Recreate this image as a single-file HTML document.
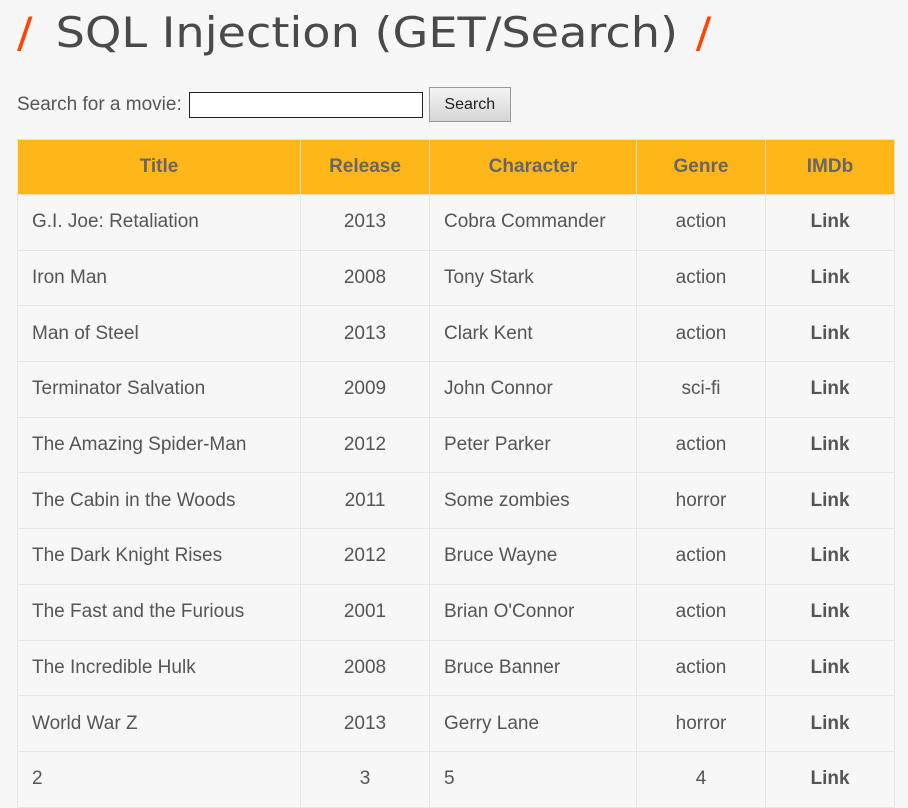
<!DOCTYPE html>
<html><head><meta charset="utf-8"><style>
html,body{margin:0;padding:0;background:#f7f7f7;width:908px;height:808px;overflow:hidden}
body{font-family:"Liberation Sans",Arial,sans-serif;color:#555;position:relative}
h1{position:absolute;left:17px;top:8px;margin:0;font-family:"DejaVu Sans",sans-serif;font-weight:normal;font-size:42px;color:#4a4a4a;white-space:nowrap;transform:scaleX(1.1);transform-origin:left}
h1 span{color:#ff4500}
h1 b{font-weight:normal;margin:0 16px 0 21px}
.search{position:absolute;left:17px;top:87px;font-size:19px;display:flex;align-items:center}
.search input{border:1px solid #222;background:#fff;margin:0 6px 0 7px;padding:0;box-sizing:border-box;height:26px;width:234px}
.search button{font-family:"Liberation Sans",Arial,sans-serif;font-size:16px;height:35px;width:82px;border:1px solid #999;background:linear-gradient(#f4f4f4,#d6d6d6);color:#222;padding:0}
table{position:absolute;left:17px;top:139px;border-collapse:collapse;font-size:19px}
td,th{border:1px solid #e6e6e6;height:55.7px;padding:0 14px;box-sizing:border-box}
th{background:#ffb619;color:#666;font-weight:bold;border-color:#f0e0c0;border-left-color:#fbecc8;height:55px}
td.c{text-align:center}
td.l{font-weight:bold;text-align:center;color:#555}
</style></head><body>
<h1><span>/</span><b>SQL Injection (GET/Search)</b><span>/</span></h1>
<div class="search">Search for a movie: <input type="text"><button>Search</button></div>
<table>
<tr><th style="width:283px">Title</th><th style="width:129px">Release</th><th style="width:207px">Character</th><th style="width:129px">Genre</th><th style="width:129px">IMDb</th></tr>
<tr><td>G.I. Joe: Retaliation</td><td class="c">2013</td><td>Cobra Commander</td><td class="c">action</td><td class="l">Link</td></tr>
<tr><td>Iron Man</td><td class="c">2008</td><td>Tony Stark</td><td class="c">action</td><td class="l">Link</td></tr>
<tr><td>Man of Steel</td><td class="c">2013</td><td>Clark Kent</td><td class="c">action</td><td class="l">Link</td></tr>
<tr><td>Terminator Salvation</td><td class="c">2009</td><td>John Connor</td><td class="c">sci-fi</td><td class="l">Link</td></tr>
<tr><td>The Amazing Spider-Man</td><td class="c">2012</td><td>Peter Parker</td><td class="c">action</td><td class="l">Link</td></tr>
<tr><td>The Cabin in the Woods</td><td class="c">2011</td><td>Some zombies</td><td class="c">horror</td><td class="l">Link</td></tr>
<tr><td>The Dark Knight Rises</td><td class="c">2012</td><td>Bruce Wayne</td><td class="c">action</td><td class="l">Link</td></tr>
<tr><td>The Fast and the Furious</td><td class="c">2001</td><td>Brian O'Connor</td><td class="c">action</td><td class="l">Link</td></tr>
<tr><td>The Incredible Hulk</td><td class="c">2008</td><td>Bruce Banner</td><td class="c">action</td><td class="l">Link</td></tr>
<tr><td>World War Z</td><td class="c">2013</td><td>Gerry Lane</td><td class="c">horror</td><td class="l">Link</td></tr>
<tr><td>2</td><td class="c">3</td><td>5</td><td class="c">4</td><td class="l">Link</td></tr>
</table>
</body></html>
